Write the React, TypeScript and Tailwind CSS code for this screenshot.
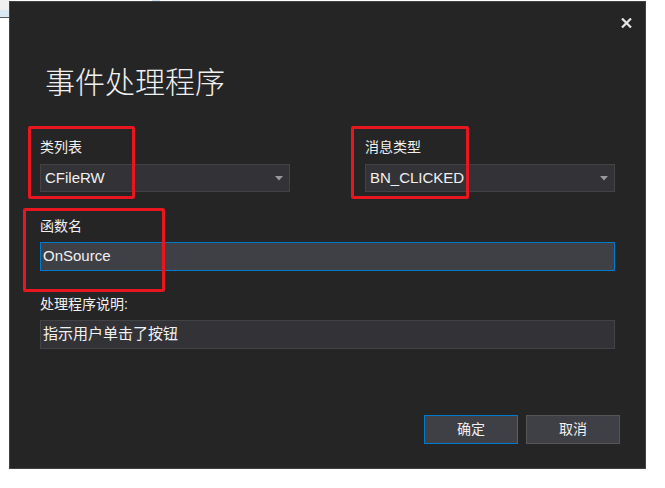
const font = "font-['Liberation_Sans','Noto_Sans_CJK_SC',sans-serif]"

function Combo({ value }: { value: string }) {
  return (
    <div className="flex h-[28px] w-[250px] items-center justify-between border border-[#434346] bg-[#333337] pl-[4px] pr-[6px]">
      <span className="text-[15px] text-[#f1f1f1]">{value}</span>
      <svg width="8" height="5" viewBox="0 0 8 5">
        <path d="M0 0h8L4 4.5z" fill="#999999" />
      </svg>
    </div>
  )
}

function Label({ children }: { children: React.ReactNode }) {
  return <div className="text-[14px] leading-[20px] text-[#f1f1f1]">{children}</div>
}

export default function App() {
  return (
    <div className={`relative h-[488px] w-[665px] overflow-hidden bg-white ${font}`}>
      {/* bits of the window behind the dialog */}
      <div className="absolute left-0 top-0 h-[10px] w-[9px] bg-[#f0f0f0]" />
      <div className="absolute left-0 top-[10px] h-[7px] w-[9px] bg-[#dce7f4]" />
      <div className="absolute left-0 top-[17px] h-[1px] w-[9px] bg-[#555555]" />
      <div className="absolute left-[152px] top-0 h-[1px] w-[8px] bg-[#cfe0f3]" />

      <div className="ml-[9px] mt-[1px] flex h-[468px] w-[637px] flex-col border border-[#434346] bg-[#252526]">
        <div className="flex justify-end pr-[13px] pt-[10px]">
          <button className="flex h-[21px] w-[12px] items-center justify-center">
            <svg width="11" height="10" viewBox="0 0 11 10">
              <path d="M1 0.5L10 9.5M10 0.5L1 9.5" stroke="#e6e6e6" strokeWidth="2.2" />
            </svg>
          </button>
        </div>

        <div className="flex flex-col px-[30px]">
          <h1 className="ml-[5px] mt-[32px] text-[30px] font-light leading-[36px] text-[#f1f1f1]">
            事件处理程序
          </h1>

          <div className="mt-[36px] flex gap-[75px]">
            <div className="flex flex-col gap-[7px]">
              <Label>类列表</Label>
              <Combo value="CFileRW" />
            </div>
            <div className="flex flex-col gap-[7px]">
              <Label>消息类型</Label>
              <Combo value="BN_CLICKED" />
            </div>
          </div>

          <div className="mt-[24px]">
            <Label>函数名</Label>
          </div>
          <div className="mt-[6px] flex h-[29px] items-center border border-[#007acc] bg-[#3f3f46] pl-[2px]">
            <span className="text-[15px] text-[#f1f1f1]">OnSource</span>
          </div>

          <div className="mt-[23px]">
            <Label>处理程序说明:</Label>
          </div>
          <div className="mt-[6px] flex h-[29px] items-center border border-[#434346] bg-[#333337] pl-[2px]">
            <span className="text-[15px] text-[#f1f1f1]">指示用户单击了按钮</span>
          </div>

          <div className="-mr-[5px] mt-[66px] flex justify-end gap-[8px]">
            <button className="h-[29px] w-[94px] border border-[#007acc] bg-[#3f3f46] text-[14px] text-[#f1f1f1]">
              确定
            </button>
            <button className="h-[29px] w-[94px] border border-[#555555] bg-[#3f3f46] text-[14px] text-[#f1f1f1]">
              取消
            </button>
          </div>
        </div>
      </div>

      {/* red annotation boxes */}
      <div className="absolute left-[28px] top-[126px] h-[73px] w-[107px] rounded-[2px] border-[3px] border-[#e8161f]" />
      <div className="absolute left-[351px] top-[126px] h-[73px] w-[118px] rounded-[2px] border-[3px] border-[#e8161f]" />
      <div className="absolute left-[23px] top-[208px] h-[84px] w-[142px] rounded-[2px] border-[3px] border-[#e8161f]" />
    </div>
  )
}
